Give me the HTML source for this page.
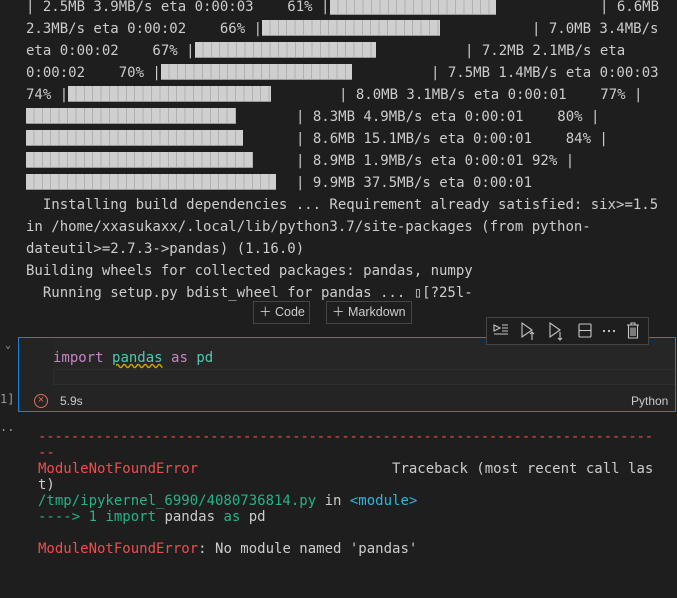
<!DOCTYPE html>
<html><head><meta charset="utf-8"><style>
*{margin:0;padding:0;box-sizing:border-box}
body{width:677px;height:598px;background:#1e1e1e;overflow:hidden;position:relative;font-family:"DejaVu Sans Mono","Liberation Mono",monospace;font-size:14px;color:#cccccc}
.t{position:absolute;white-space:pre;line-height:22px;height:22px}
.b{position:absolute;height:16px;background:repeating-linear-gradient(90deg,#cfcfcf 0,#cfcfcf 7.4px,#b0b0b0 7.4px,#b0b0b0 8.4px);border-bottom:1px solid #999}
.o{position:absolute;white-space:pre;line-height:16px;left:38px;font-size:14px}
.r{color:#f14c4c}.g{color:#23b387}.c{color:#29b8db}
.btn{position:absolute;top:301px;height:23px;border:1px solid #454545;font-family:"Liberation Sans",sans-serif;font-size:12.5px;color:#ccc;line-height:21px;padding-left:5px}
</style></head><body>
<div class="t" style="left:26px;top:-4px">| 2.5MB 3.9MB/s eta 0:00:03    61% |</div><div class="b" style="left:330px;width:166px;top:-1px"></div><div class="t" style="left:600px;top:-4px">| 6.6MB</div>
<div class="t" style="left:26px;top:18px">2.3MB/s eta 0:00:02    66% |</div><div class="b" style="left:262px;width:178px;top:20px"></div><div class="t" style="left:532px;top:18px">| 7.0MB 3.4MB/s</div>
<div class="t" style="left:26px;top:40px">eta 0:00:02    67% |</div><div class="b" style="left:195px;width:181px;top:42px"></div><div class="t" style="left:465px;top:40px">| 7.2MB 2.1MB/s eta</div>
<div class="t" style="left:26px;top:62px">0:00:02    70% |</div><div class="b" style="left:161px;width:191px;top:64px"></div><div class="t" style="left:431px;top:62px">| 7.5MB 1.4MB/s eta 0:00:03</div>
<div class="t" style="left:26px;top:84px">74% |</div><div class="b" style="left:68px;width:203px;top:86px"></div><div class="t" style="left:339px;top:84px">| 8.0MB 3.1MB/s eta 0:00:01    77% |</div>
<div class="b" style="left:26px;width:210px;top:108px"></div><div class="t" style="left:296px;top:106px">| 8.3MB 4.9MB/s eta 0:00:01    80% |</div>
<div class="b" style="left:26px;width:217px;top:130px"></div><div class="t" style="left:296px;top:128px">| 8.6MB 15.1MB/s eta 0:00:01    84% |</div>
<div class="b" style="left:26px;width:227px;top:152px"></div><div class="t" style="left:296px;top:150px">| 8.9MB 1.9MB/s eta 0:00:01 92% |</div>
<div class="b" style="left:26px;width:250px;top:174px"></div><div class="t" style="left:296px;top:172px">| 9.9MB 37.5MB/s eta 0:00:01</div>
<div class="t" style="left:26px;top:194px">  Installing build dependencies ... Requirement already satisfied: six&gt;=1.5</div>
<div class="t" style="left:26px;top:216px">in /home/xxasukaxx/.local/lib/python3.7/site-packages (from python-</div>
<div class="t" style="left:26px;top:238px">dateutil&gt;=2.7.3-&gt;pandas) (1.16.0)</div>
<div class="t" style="left:26px;top:260px">Building wheels for collected packages: pandas, numpy</div>
<div class="t" style="left:26px;top:282px">  Running setup.py bdist_wheel for pandas ... ▯[?25l-</div>

<div class="btn" style="left:253px;width:57px">＋ Code</div>
<div class="btn" style="left:326px;width:86px">＋ Markdown</div>

<div style="position:absolute;left:5px;top:340px;color:#999;font-size:10px">⌄</div>
<div style="position:absolute;left:0;top:392px;color:#999;font-size:12px">1]</div>
<div style="position:absolute;left:0;top:420px;color:#999;font-size:12px">..</div>

<div style="position:absolute;left:18px;top:337px;width:658px;height:75px;border:1px solid #1382e0;background:#242424"></div>
<div style="position:absolute;left:53px;top:338px;width:622px;height:47px;background:#262626"></div>
<div style="position:absolute;left:53px;top:369px;width:622px;height:16px;border:1px solid #2e2e2e;border-right:none"></div>
<div style="position:absolute;left:53px;top:347px;white-space:pre;line-height:22px;font-size:14px"><span style="color:#c586c0">import</span> <span style="color:#4ec9b0;text-decoration:underline wavy #cca700">pandas</span> <span style="color:#c586c0">as</span> <span style="color:#4ec9b0">pd</span></div>
<div style="position:absolute;left:34px;top:394px;width:14px;height:14px;border:1.3px solid #e06c5a;border-radius:50%;color:#e06c5a;font-size:11px;line-height:11px;text-align:center;font-family:'Liberation Sans',sans-serif">×</div>
<div style="position:absolute;left:60px;top:394px;font-family:'Liberation Sans',sans-serif;font-size:12px;color:#ccc">5.9s</div>
<div style="position:absolute;left:631px;top:394px;font-family:'Liberation Sans',sans-serif;font-size:12px;color:#ccc">Python</div>

<div style="position:absolute;left:486px;top:317px;width:163px;height:28px;border:1px solid #454545;background:#1e1e1e"></div>
<svg style="position:absolute;left:486px;top:317px" width="163" height="28" fill="none" stroke="#c5c5c5" stroke-width="1.1">
<path d="M8 8 L14 11 L8 14 Z M16 8 H22 M16 11 H22 M16 14 H22 M8 17 H22"/>
<path d="M36 6 V20 L46 13 Z M46 23 V15 M44 17 L46 15 L48 17"/>
<path d="M64 6 V20 L74 13 Z M74 15 V23 M72 21 L74 23 L76 21"/>
<rect x="93" y="7" width="12" height="13" rx="1"/><path d="M93 13.5 H105"/>
<circle cx="118" cy="14" r=".6" fill="#c5c5c5"/><circle cx="123" cy="14" r=".6" fill="#c5c5c5"/><circle cx="128" cy="14" r=".6" fill="#c5c5c5"/>
<path d="M141 8 H153 M145 8 V6 H149 V8 M142.5 8 V21 H151.5 V8 M145 10.5 V19 M147 10.5 V19 M149 10.5 V19"/>
</svg>

<div class="o r" style="top:429px;letter-spacing:-0.23px">---------------------------------------------------------------------------</div>
<div class="o r" style="top:445px">--</div>
<div class="o" style="top:461px"><span class="r">ModuleNotFoundError</span>                       Traceback (most recent call las</div>
<div class="o" style="top:477px">t)</div>
<div class="o" style="top:493px"><span class="g">/tmp/ipykernel_6990/4080736814.py</span> in <span class="c">&lt;module&gt;</span></div>
<div class="o" style="top:509px"><span class="g">----&gt; 1 import</span> pandas <span class="g">as</span> pd</div>
<div class="o" style="top:541px"><span class="r">ModuleNotFoundError</span>: No module named 'pandas'</div>
</body></html>
